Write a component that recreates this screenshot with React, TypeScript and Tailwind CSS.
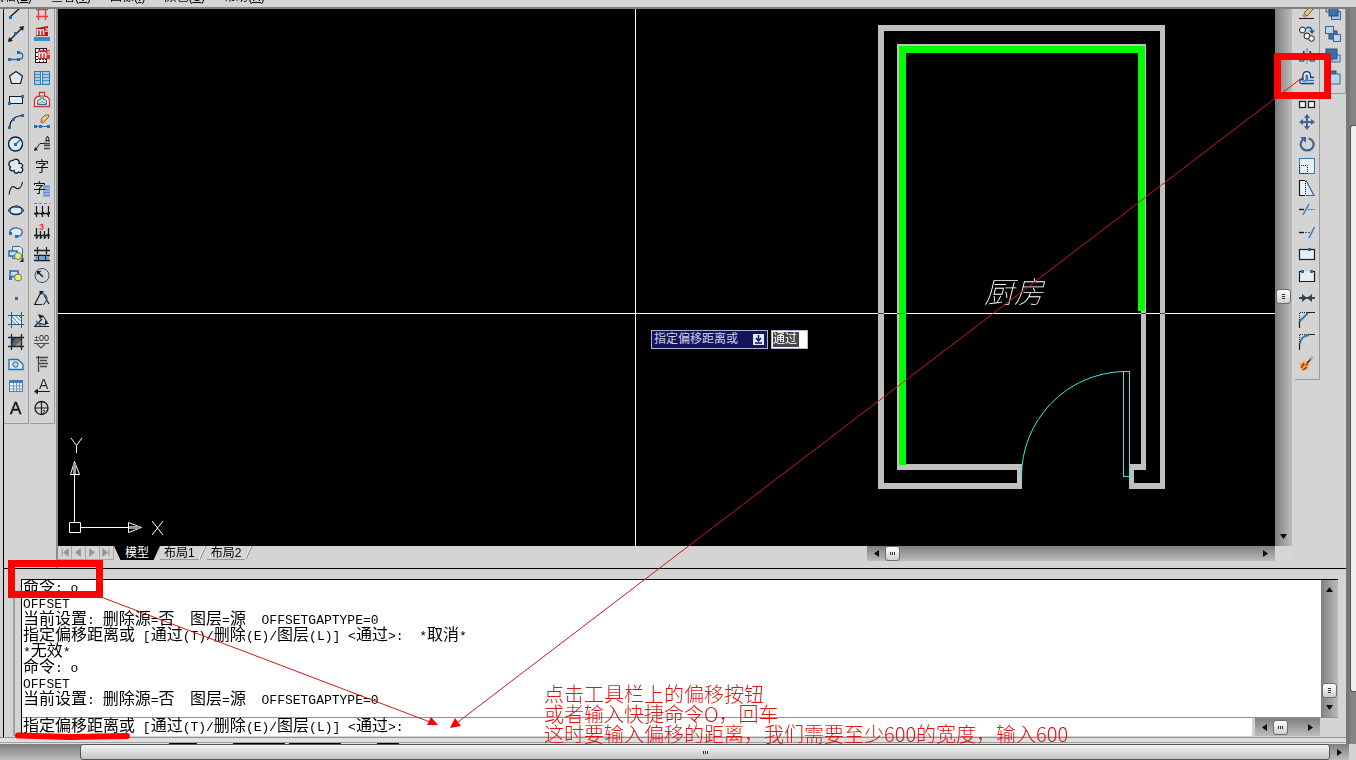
import React from 'react';

interface Tool {
    label: string;
    icon: React.ReactNode;
}

const BLUE = '#1f6fb5';
const INK = '#1c1c1c';
const STEEL = '#3f648f';

// small square grip used by most of the drawing icons
const Grip = ({ x, y }: { x: number; y: number }) => (
    <rect x={x} y={y} width="3" height="3" fill={BLUE} stroke="none" />
);

const drawTools: Tool[] = [
    {
        label: '直线',
        icon: <><path d="M2 13L12 4" stroke={INK} strokeWidth="1.4" /><Grip x={1} y={12} /></>,
    },
    {
        label: '构造线',
        icon: <><path d="M2 14L14 2" stroke={INK} strokeWidth="1.4" /><path d="M0 16l1-5 4 4zM16 0l-5 1 4 4z" fill={INK} /><Grip x={6} y={6} /></>,
    },
    {
        label: '多段线',
        icon: <><path d="M1 11.500H11C16 11 16 5 11 4.500" stroke={STEEL} strokeWidth="1.300" /><Grip x={0} y={10} /><Grip x={9} y={10} /><Grip x={9} y={3} /></>,
    },
    {
        label: '正多边形',
        icon: <path d="M8 1.500L14.500 6L12.500 13.500H3.500L1.500 6Z" fill="#dcebf8" stroke={INK} strokeWidth="1.200" />,
    },
    {
        label: '矩形',
        icon: <><rect x="1.500" y="4.500" width="13" height="7" fill="#dcebf8" stroke={INK} /><Grip x={0} y={10} /><Grip x={13} y={3} /></>,
    },
    {
        label: '圆弧',
        icon: <><path d="M1.500 14C2 6 7 2 14 1.500" stroke={INK} strokeWidth="1.200" /><Grip x={0} y={12} /><Grip x={4} y={4} /><Grip x={13} y={0} /></>,
    },
    {
        label: '圆',
        icon: <><circle cx="7.500" cy="8" r="7" fill="#dcebf8" stroke={INK} strokeWidth="1.400" /><path d="M8 8L12 4" stroke={BLUE} strokeWidth="1.300" /><Grip x={6} y={7} /></>,
    },
    {
        label: '修订云线',
        icon: <path d="M5 2.500C8 -.5 12 2 11 5.500C15 5 15.500 9 13.500 9.500C16.500 12 13.500 16 10.500 14C9 16 6 15.500 6 12.500C3 14 .5 11 2.500 9C-.5 7 1 2 5 2.500Z" fill="#dcebf8" stroke={INK} strokeWidth="1.300" />,
    },
    {
        label: '样条曲线',
        icon: <path d="M1 14.500C2 8 4 5 7 7.500S13 9 14.500 2" stroke={INK} strokeWidth="1.100" />,
    },
    {
        label: '椭圆',
        icon: <><ellipse cx="8" cy="8.500" rx="6.500" ry="4" fill="#dcebf8" stroke={INK} strokeWidth="1.300" /><Grip x={0} y={7} /><Grip x={13} y={7} /><Grip x={7} y={3} /></>,
    },
    {
        label: '椭圆弧',
        icon: <><path d="M2 9C1 4 8 3 11 4.500C16 6 15 12 9 12.500" fill="#dcebf8" stroke={STEEL} strokeWidth="1.300" /><Grip x={1} y={8} /><Grip x={7} y={11} /></>,
    },
    {
        label: '插入块',
        icon: <><path d="M4.500 .5H12L14.500 3V12.500H4.500Z" fill="#dcebf8" stroke={STEEL} /><rect x="1" y="5" width="8" height="5" fill="#c6dcf0" stroke={BLUE} strokeWidth="1.500" /><circle cx="10" cy="10" r="3.500" fill="#e4eb92" stroke="#6b7d2a" /><path d="M15.500 12v4h-4z" fill={INK} /></>,
    },
    {
        label: '创建块',
        icon: <><rect x="2" y="3" width="8" height="5.500" fill="#c6dcf0" stroke={BLUE} strokeWidth="1.500" /><circle cx="10" cy="9.500" r="3.500" fill="#e4eb92" stroke="#6b7d2a" /><Grip x={1} y={9} /></>,
    },
    { label: '点', icon: <Grip x={7} y={7} /> },
    {
        label: '图案填充',
        icon: <><rect x="3" y="3" width="10" height="10" fill="#eff7ff" /><path d="M3.500 4L12 13M7 3.500L12.500 9M3.500 8L8 12.500M10 3l3 3" stroke={BLUE} /><path d="M3.500 0V16M13.500 0V16M0 3.500H16M0 12.500H16" stroke="#245c8c" /></>,
    },
    {
        label: '渐变色',
        icon: <><rect x="3" y="3" width="10" height="10" fill="#5d6558" /><path d="M3 3h5l-5 9z" fill="#263b68" /><path d="M13 6v7H6z" fill="#95947a" /><path d="M3.500 0V16M13.500 0V16M0 3.500H16M0 12.500H16" stroke="#202a3a" strokeWidth="1.400" /></>,
    },
    {
        label: '面域',
        icon: <><path d="M1 3.500H10L15 8.500V13.500H1Z" fill="#dcebf8" stroke={BLUE} strokeWidth="1.300" /><circle cx="7.500" cy="8.500" r="2.700" fill="#d4d0d0" stroke="#345a80" /></>,
    },
    {
        label: '表格',
        icon: <><rect x="1.500" y="2.500" width="13" height="11" fill="#f6faff" stroke="#4a76bd" /><rect x="1" y="2" width="14" height="3" fill="#4a76bd" /><path d="M2 8H14M2 11H14M5.500 5V13M8.500 5V13M11.500 5V13" stroke="#6d96d2" /></>,
    },
    {
        label: '多行文字',
        icon: <text x="2" y="14" fontSize="17" fill="#111" stroke="#111" strokeWidth=".4" className="font-['Liberation_Sans']">A</text>,
    },
];

const houseTools: Tool[] = [
    {
        label: '轴网',
        icon: <path d="M4.500 0V16M11.500 0V16M2 5.500H14M2 12.500H14" stroke="#ee3434" strokeWidth="1.300" />,
    },
    {
        label: '面积',
        icon: <><path d="M2 2L14 0V10H2Z" fill="#c4181c" /><text x="2" y="9" fontSize="10" fontWeight="bold" fill="#fff" className="font-['Liberation_Sans']">m²</text><rect x="0" y="11" width="16" height="4" fill="#4189c2" /></>,
    },
    {
        label: '面积表',
        icon: <><rect x="1.500" y=".5" width="11" height="14" fill="#fff" stroke={INK} /><path d="M2 4.500H12M2 8.500H12M2 11.500H12M5.500 1V14M9.500 1V14" stroke={INK} strokeDasharray="2 1" /><rect x="4" y="2" width="12" height="9" fill="#cb3538" /><text x="4" y="10" fontSize="10" fontWeight="bold" fill="#fff" className="font-['Liberation_Sans']">m²</text></>,
    },
    {
        label: '门窗',
        icon: <><rect x=".5" y="1.500" width="15" height="13" fill="#a7cce0" stroke="#2f7da1" /><path d="M1 4.500H15M1 7.500H15M1 10.500H15" stroke="#4f8bc0" /><rect x="6.500" y="1.500" width="2" height="13" fill="#e3f2f8" stroke="#2f7da1" /></>,
    },
    {
        label: '房间',
        icon: <><path d="M5.500 .5H10.500V4.500H13L15.500 7.500V14.500H.5V7.500L3 4.500H5.500Z" fill="#eee" stroke="#cf3535" strokeWidth="1.300" /><path d="M7 3V7L3.500 8.500V12.500H12.500V8.500L9 7V3" fill="#e2e9a4" stroke="#1f6fb5" /><path d="M4 12L8 9.500 12 12" stroke="#49a0cc" /></>,
    },
    {
        label: '擦除线段',
        icon: <><path d="M0 12.500H16" stroke={BLUE} /><Grip x={0} y={11} /><Grip x={5} y={11} /><Grip x={13} y={11} /><path d="M7 5l4-4 4 0-1 3-5 5z" fill="#e7c46d" stroke="#555" strokeWidth=".8" /><path d="M7 5l3 3-2 2-2-2z" fill="#d97b6c" /></>,
    },
    {
        label: '引出标注',
        icon: <><path d="M1 14L6 7.500H11" stroke={INK} /><path d="M0 15l1-4 3 3z" fill={INK} /><path d="M10 9.500H16M10 12.500H16M10 7.500H16" stroke="#444" strokeWidth="1.400" /><path d="M12 6V3L13.500 0L15 3V6M12 4.500H15" stroke={INK} /></>,
    },
    { label: '单行文字', icon: <text x="1" y="13" fontSize="14" fill="#111" className="font-['Noto_Sans_CJK_SC']">字</text> },
    {
        label: '文字段落',
        icon: <><path d="M9 6.500H16M9 9.500H16M9 12.500H16M9 15.500H16" stroke="#5b8fd0" strokeWidth="2" /><text x="-1" y="12" fontSize="13" fill="#111" className="font-['Noto_Sans_CJK_SC']">字</text></>,
    },
    {
        label: '逐点标注',
        icon: <><path d="M0 1.500H16" stroke="#ee5050" strokeDasharray="3 2" /><path d="M2.500 4V15M8.500 4V15M14.500 4V15M0 11.500H16" stroke={INK} strokeWidth="1.300" /><path d="M1 13l3-3M7 13l3-3M13 13l3-3" stroke={INK} /></>,
    },
    {
        label: '尺寸标注',
        icon: <><text x="5" y="6" fontSize="9" fontWeight="bold" fill="#e33" className="font-['Liberation_Sans']">3</text><path d="M2.500 4V15M6.500 7V15M10.500 7V15M14.500 4V15M0 11.500H16" stroke={INK} strokeWidth="1.300" /><path d="M2 10l2 4M6 10l2 4M10 10l2 4M13 10l2 4" stroke={INK} /></>,
    },
    {
        label: '门窗标注',
        icon: <><path d="M0 4.500H16M3.500 1V8M12.500 1V8" stroke={INK} strokeWidth="1.300" /><path d="M0 9.500H16M0 14.500H16" stroke={INK} strokeWidth="1.300" /><rect x="1" y="10" width="14" height="4" fill="#6fa3d2" /><path d="M4.500 9V15M11.500 9V15" stroke={INK} /></>,
    },
    {
        label: '半径标注',
        icon: <><circle cx="8" cy="7.500" r="7" stroke="#31506f" /><path d="M9 9L5 5" stroke={INK} strokeWidth="1.500" /><path d="M2.500 3h5l-4 4z" fill={INK} /></>,
    },
    {
        label: '角度标注',
        icon: <><path d="M0 14.500H8M1 14L7 2M10 5l5 9" stroke={INK} strokeWidth="1.200" /><path d="M5 4C9 2 12 5 13 8C13 10 11 13 9 15" stroke={STEEL} strokeWidth="1.400" /><path d="M5 1l5 0-3 4z" fill={INK} /></>,
    },
    {
        label: '弧长标注',
        icon: <><path d="M0 14.500H15M1 14L8 7M4 11l8 2" stroke={INK} strokeWidth="1.200" /><path d="M4 2l6 2-4 3zM11 8l4 4-4 0z" fill={INK} /><path d="M9 4L13 10" stroke={INK} /><path d="M2 9l5 5" stroke={BLUE} strokeWidth="1.500" /></>,
    },
    {
        label: '标高标注',
        icon: <><text x="0" y="7" fontSize="9" fill="#222" className="font-['Liberation_Sans']">±00</text><path d="M0 9.500H15M3 10l4 4 4-4" stroke="#5b4b41" strokeWidth="1.200" /></>,
    },
    {
        label: '做法标注',
        icon: <path d="M4.500 0V16M2 1.500H14M6 4.500H13M4 7.500H14M6 10.500H13" stroke="#454545" strokeWidth="1.300" />,
    },
    {
        label: '箭头引注',
        icon: <><text x="5" y="11" fontSize="14" fill="#333" className="font-['Liberation_Sans']">A</text><path d="M1 13.500H16" stroke={INK} /><path d="M0 13.500l4-3v6z" fill={INK} /></>,
    },
    {
        label: '索引符号',
        icon: <><circle cx="7.500" cy="8" r="6.500" stroke={INK} strokeWidth="1.300" /><path d="M1 8H14M7.500 1V15" stroke={INK} strokeWidth="1.200" /><path d="M9 10.500h2l-2 3h2" stroke={INK} strokeWidth=".8" /></>,
    },
];

const modifyTools: Tool[] = [
    {
        label: '删除',
        icon: <><path d="M0 14.500H15" stroke={INK} /><path d="M5 9l6-6 4 1-7 8z" fill="#eccb76" stroke="#444" strokeWidth=".9" /><path d="M5 9l3 3-2 2-3-2z" fill="#e08370" /></>,
    },
    {
        label: '复制',
        icon: <><circle cx="3.500" cy="4" r="3" fill="#e8f1f8" stroke={INK} /><circle cx="8" cy="10" r="3" fill="#e8f1f8" stroke={INK} /><circle cx="12.500" cy="12.500" r="2.800" fill="#e8f1f8" stroke={INK} /><path d="M7 2.500C10 0 13 2 13 5" stroke="#275a8f" strokeWidth="1.600" /><path d="M10 4.500h6l-3 3.500z" fill="#275a8f" /></>,
    },
    {
        label: '镜像',
        icon: <><path d="M8 0V16" stroke="#2f75b5" strokeDasharray="4 1" /><path d="M5 3V13H0.500ZM11 3V13H15.500Z" fill="#e8f1f8" stroke={INK} /></>,
    },
    {
        label: '偏移',
        icon: <><path d="M15 13.500H2.500C.5 13.500 0 10 2.500 9.500H4V5C4.500 .5 11 .5 11.500 5V7.500H15" fill="#e0edf8" stroke="#173a60" strokeWidth="1.300" /><path d="M15 10.500H8.500V5.500H7V11H3.500" stroke="#2f75b5" strokeWidth="1.300" /></>,
    },
    {
        label: '阵列',
        icon: <><rect x=".5" y="9.500" width="6" height="6" fill="#eef4fa" stroke={INK} strokeWidth="1.200" /><rect x="9.500" y="9.500" width="6" height="6" fill="#eef4fa" stroke={INK} strokeWidth="1.200" /></>,
    },
    {
        label: '移动',
        icon: <><path d="M8 2V14M2 8H14" stroke={STEEL} strokeWidth="2" /><path d="M8 0l3 4H5zM8 16l3-4H5zM0 8l4-3v6zM16 8l-4-3v6z" fill={STEEL} /></>,
    },
    {
        label: '旋转',
        icon: <><path d="M4 3.500C1 6 1 10 3 12C6 16 13 15 14.500 9.500C15 6 13 3 9.500 2.500" stroke={STEEL} strokeWidth="2.200" /><path d="M1 1h6v6z" fill={STEEL} /></>,
    },
    {
        label: '缩放',
        icon: <><rect x=".5" y=".5" width="15" height="15" fill="#e4eff8" stroke="#4379a8" /><path d="M0 7.500H8.500V16" stroke={INK} strokeDasharray="1 1" /><path d="M.5 7V16M0 15.500H9" stroke={INK} strokeDasharray="1 1" /></>,
    },
    {
        label: '拉伸',
        icon: <><path d="M7 .5L15 15.500H7" fill="#dfecf6" stroke={STEEL} strokeWidth="1.200" /><path d="M6 .5H.5V15.500H6" fill="#eef4f8" stroke={INK} strokeWidth="1.200" /><path d="M6.500 1V15" stroke={INK} strokeDasharray="1 1" /></>,
    },
    {
        label: '修剪',
        icon: <><path d="M0 7.500H5" stroke={INK} strokeWidth="1.400" /><path d="M9 7.500H16" stroke={BLUE} strokeDasharray="2 1" /><path d="M4 13L10 2" stroke="#2f75b5" strokeWidth="1.400" /></>,
    },
    {
        label: '延伸',
        icon: <><path d="M0 8.500H5" stroke={INK} strokeWidth="1.400" /><path d="M6 8.500H11" stroke={BLUE} strokeDasharray="2 1" /><path d="M10 14L15.500 3" stroke="#2f75b5" strokeWidth="1.400" /></>,
    },
    {
        label: '打断于点',
        icon: <><rect x=".5" y="3.500" width="15" height="10" fill="#e4eff8" stroke={INK} strokeWidth="1.200" /><rect x="9" y="2" width="3" height="3" fill={STEEL} /></>,
    },
    {
        label: '打断',
        icon: <><path d="M3 3.500H.5V13.500H15.500V3.500H13" fill="#e4eff8" stroke={INK} strokeWidth="1.200" /><rect x="2" y="2" width="3" height="3" fill={STEEL} /><rect x="11" y="2" width="3" height="3" fill={STEEL} /></>,
    },
    {
        label: '合并',
        icon: <><path d="M0 8H16" stroke={INK} strokeWidth="1.600" /><path d="M3 4l5 4-5 4zM13 4L8 8l5 4z" fill="#2b4257" /></>,
    },
    {
        label: '倒角',
        icon: <><path d="M.5 8V.5H8" stroke={INK} strokeDasharray="1 1" /><path d="M.5 16V8.500M8 .5H16" stroke={INK} strokeWidth="1.200" /><path d="M1 9L9 1" stroke="#2f75b5" strokeWidth="1.800" /></>,
    },
    {
        label: '圆角',
        icon: <><path d="M.5 8V.5H8" stroke={INK} strokeDasharray="1 1" /><path d="M.5 16V9M9 .5H16" stroke={INK} strokeWidth="1.200" /><path d="M1 9.500C1.500 5 5 1.500 10 1" stroke="#2f75b5" strokeWidth="2" /></>,
    },
    {
        label: '分解',
        icon: <><path d="M0 6l3 1 2-4 2 3 4 0-1 4-2 4-3-1-3 2 0-4z" fill="#f0b95a" /><path d="M2 12l3-5M6 9l3-1M4 14l4-3M3 8l2 2" stroke="#c8351c" strokeWidth="1.700" /><path d="M8 7l4-4" stroke={INK} strokeWidth="1.400" /><path d="M12 0v5M10 2.500h5M14 0l-3 5" stroke="#8aa4bd" strokeWidth=".8" /></>,
    },
];

const orderTools: Tool[] = [
    { label: '前置', icon: <><rect x="1" y="0" width="9" height="8" fill="#a9c8e4" stroke={STEEL} /><rect x="6.500" y="7.500" width="9" height="8" fill="#a9c8e4" stroke={STEEL} /><rect x="4" y="4" width="9" height="8" fill="#3d6fae" stroke="#27507f" /></> },
    { label: '后置', icon: <><rect x="4" y="5" width="8" height="8" fill="#3d6fae" stroke="#27507f" /><rect x=".5" y=".5" width="8" height="7" fill="#b9d5ec" stroke={STEEL} /><rect x="8.500" y="8.500" width="7" height="7" fill="#b9d5ec" stroke={STEEL} /></> },
    { label: '置于对象之上', icon: <><rect x="7" y="7" width="8" height="7" fill="#b9d5ec" stroke={STEEL} /><rect x="1" y="1" width="11" height="10" fill="#3d6fae" stroke="#27507f" /></> },
    { label: '置于对象之下', icon: <><rect x="1" y="1" width="10" height="9" fill="#3d6fae" stroke="#27507f" /><rect x="5" y="4" width="10" height="10" fill="#b9d5ec" stroke={STEEL} /></> },
];

const Toolbar = ({ name, tools }: { name: string; tools: Tool[] }) => (
    <div role="toolbar" aria-label={name} className="-mt-2 flex w-[25px] shrink-0 flex-col self-start border-r border-b border-[#9a9a9a] pb-1">
        {tools.map((tool) => (
            <button key={tool.label} type="button" aria-label={tool.label} className="flex h-[22px] items-center justify-center">
                <svg width="16" height="16" viewBox="0 0 16 16" fill="none" className="overflow-visible">
                    {tool.icon}
                </svg>
            </button>
        ))}
    </div>
);

const Arrow = ({ dir }: { dir: 'left' | 'right' | 'up' | 'down' }) => {
    const shapes = {
        left: 'M6 0v7L1 3.500z',
        right: 'M1 0v7l5-3.500z',
        up: 'M0 6h7L3.500 1z',
        down: 'M0 1h7L3.500 6z',
    };
    return (
        <svg width="7" height="7" viewBox="0 0 7 7" className="shrink-0">
            <path d={shapes[dir]} fill="#0c0c0c" />
        </svg>
    );
};

// scrollbar handle with the three little ridges
const Thumb = ({ vertical = false }: { vertical?: boolean }) => (
    <div className="flex size-[15px] shrink-0 items-center justify-center rounded-[3px] border border-[#6e6e6e] bg-linear-to-b from-white to-[#cfcfcf]">
        <svg width="5" height="5" viewBox="0 0 5 5" stroke="#333" shapeRendering="crispEdges">
            <path d={vertical ? 'M1 .5H4M1 2.500H4M1 4.500H4' : 'M.5 1V4M2.500 1V4M4.500 1V4'} />
        </svg>
    </div>
);

const menus = [
    ['编辑', 'E'],
    ['查看', 'V'],
    ['图像', 'I'],
    ['颜色', 'C'],
    ['帮助', 'H'],
];

const MenuBar = () => (
    <nav className="flex h-[9px] shrink-0 items-end gap-[19px] overflow-hidden border-b-2 border-[#808080] bg-[#d4d4d4] text-[12px] leading-[14px]">
        {menus.map(([name, key], i) => (
            <button key={key} type="button" className={i === 0 ? '-ml-2 mb-[3px] shrink-0' : 'mb-[3px] shrink-0'}>
                {name}(<u>{key}</u>)
            </button>
        ))}
    </nav>
);

const Drawing = () => (
    <svg className="block h-full w-full" fill="none">
        <g transform="translate(-58 -9)">
            {/* walls */}
            <g fill="#c0c0c0" shapeRendering="crispEdges">
                <path d="M878 25H1165V31H884V483H1017V470H897V44H1146V470H1134V483H1160V31H1165V489H1129V464H1141V50H903V464H1022V489H878Z" />
            </g>
            <path d="M899 46H1145V311H1138V53H906V465H899Z" fill="#00ff00" shapeRendering="crispEdges" />
            {/* door */}
            <path d="M1021.500 477A105 105 0 0 1 1123 371.500" stroke="#40e6e6" />
            <path d="M1123.500 371.500H1129.500V476.500H1123.500Z" stroke="#40e6e6" shapeRendering="crispEdges" />
            <text x="984" y="303" fontSize="30" fill="#fff" fontStyle="italic" className="font-['Noto_Sans_CJK_SC',sans-serif] font-thin">厨房</text>
            {/* coordinate axes */}
            <g stroke="#fff">
                <path d="M69.500 522.500H80.500V532.500H69.500ZM74.500 522V474M70.500 474.500H79.500L74.500 461.500ZM81 527.500H128M128.500 522.500V532.500L141.500 527.500Z" />
                <path d="M74.500 464V474M129 527.500H140" stroke="#999" strokeWidth="3" />
                <path d="M71 438L76.500 445.500V453M82 438L76.500 445.500M152 521L163 535M163 521L152 535" />
            </g>
        </g>
    </svg>
);

const Canvas = () => (
    <div className="relative min-w-0 flex-1 overflow-hidden bg-black">
        <Drawing />
        {/* crosshair */}
        <div className="absolute inset-x-0 top-[304px] h-px bg-white mix-blend-difference" />
        <div className="absolute inset-y-0 left-[577px] w-px bg-white" />
        <label className="absolute top-[321px] left-[593px] flex items-center gap-[3px] text-[12px] leading-[17px]">
            <span className="flex w-[117px] items-center justify-between border border-[#b4b4d8] bg-[#14145c] px-[2px] text-[#d0d0ea]">
                指定偏移距离或
                <svg width="11" height="11" viewBox="0 0 11 11" className="mr-px">
                    <rect width="11" height="11" fill="#dcecff" />
                    <path d="M5.500 1V6M3 4l2.500 3L8 4M2 9H9" stroke="#10106a" fill="none" strokeWidth="1.400" />
                </svg>
            </span>
            <span className="flex w-[37px] border border-[#b4b4d8] bg-white px-px py-px">
                <input defaultValue="通过" aria-label="偏移距离" className="h-[15px] w-[26px] bg-[#484848] text-[12px] text-white outline-none" />
            </span>
        </label>
    </div>
);

const TabSlash = () => (
    <svg width="8" height="14" viewBox="0 0 8 14" className="shrink-0" fill="none">
        <path d="M1 13L7 0" stroke="#777" />
        <path d="M0 13L6 0" stroke="#f4f4f4" />
    </svg>
);

const navShapes = ['M4.500 3V11M11 3V11L6 7Z', 'M9 3V11L4 7Z', 'M4 3V11L9 7Z', 'M9.500 3V11M3 3V11L8 7Z'];
const navLabels = ['第一个', '上一个', '下一个', '最后一个'];

const LayoutTabs = () => (
    <div className="flex h-[15px] items-stretch text-[12px] leading-[14px]">
        <div className="flex w-[804px] shrink-0">
            {navShapes.map((d, i) => (
                <button key={d} type="button" aria-label={navLabels[i]} className="h-[14px] w-[14px] border-r border-b border-[#a8a8a8]">
                    <svg width="13" height="13" viewBox="0 0 14 14" fill="#959595" stroke="#959595">
                        <path d={d} />
                    </svg>
                </button>
            ))}
            <button type="button" className="h-[14px] w-[46px] bg-black text-white [clip-path:polygon(0_0,100%_0,86%_100%,14%_100%)]">模型</button>
            <button type="button" className="h-[14px] border-b border-[#999] pr-1 pl-1">布局1</button>
            <TabSlash />
            <button type="button" className="h-[14px] border-b border-[#999] px-1">布局2</button>
            <TabSlash />
        </div>
        <div className="ml-[5px] flex flex-1 items-center bg-linear-to-b from-[#808080] to-[#bcbcbc] px-[6px]">
            <Arrow dir="left" />
            <div className="ml-[5px] flex flex-1">
                <Thumb />
            </div>
            <Arrow dir="right" />
        </div>
        <div className="w-[17px] shrink-0 bg-[#d6d6d6]" />
    </div>
);

// CJK glyphs are two columns wide, Latin ones a single column
const Mono = ({ children }: { children: string }) => (
    <>
        {children.split(/([\u4e00-\u9fff]+)/).map((part, i) => (
            <span key={i} className={i % 2 === 1 ? 'text-[16px]' : 'text-[13px]'}>{part}</span>
        ))}
    </>
);

const history = [
    '命令: o',
    'OFFSET',
    '当前设置: 删除源=否  图层=源  OFFSETGAPTYPE=0',
    '指定偏移距离或 [通过(T)/删除(E)/图层(L)] <通过>:  *取消*',
    '*无效*',
    '命令: o',
    'OFFSET',
    '当前设置: 删除源=否  图层=源  OFFSETGAPTYPE=0',
];

const CommandPanel = () => (
    <section aria-label="命令行" className="ml-[3px] flex shrink-0 flex-col border-t border-l border-black bg-[#d4d4d4] pt-[10px] pr-2 pb-px pl-[9px] font-['Liberation_Mono','Noto_Sans_CJK_SC',monospace] text-black">
        <div className="flex border-l-2 border-[#a0a0a0] pl-[6px]">
            <div className="flex min-w-0 flex-1 flex-col border-t border-l border-black">
                <div className="flex h-[138px] border-b border-[#909090]">
                    <div className="flex-1 overflow-hidden bg-white pl-px">
                        {history.map((line, i) => (
                            <p key={i} className="h-4 leading-4 whitespace-pre">
                                <Mono>{line}</Mono>
                            </p>
                        ))}
                    </div>
                    <div className="flex w-[17px] flex-col items-center bg-linear-to-r from-[#808080] to-[#bcbcbc] pt-[6px] pb-[6px]">
                        <Arrow dir="up" />
                        <div className="flex-1" />
                        <Thumb vertical />
                        <div className="h-[6px]" />
                        <Arrow dir="down" />
                    </div>
                </div>
                <div className="flex h-[18px]">
                    <label className="flex-1 bg-white pl-px leading-[18px] whitespace-pre">
                        <Mono>{'指定偏移距离或 [通过(T)/删除(E)/图层(L)] <通过>:'}</Mono>
                        <input aria-label="命令输入" className="ml-2 w-20 bg-transparent text-[13px] outline-none" />
                    </label>
                    <div className="ml-[3px] flex w-[65px] items-center bg-linear-to-b from-[#808080] to-[#bcbcbc] px-[6px]">
                        <Arrow dir="left" />
                        <div className="ml-[5px] flex flex-1">
                            <Thumb />
                        </div>
                        <Arrow dir="right" />
                    </div>
                    <div className="w-[18px]" />
                </div>
            </div>
        </div>
    </section>
);

const Annotations = () => (
    <>
        <svg className="pointer-events-none absolute inset-0 h-full w-full" fill="none" stroke="#ff0000">
            <path d="M11.500 563.500H99.500V594.500H11.500Z" strokeWidth="7" />
            <path d="M1277.500 56.500H1327.500V95.500H1277.500Z" strokeWidth="7" />
            <path d="M101 597L430 722M1303 77L458 722" stroke="#d01818" />
            <path d="M438 725l-11 0 4-8zM450 728l5-10 6 8z" fill="#ff0000" stroke="none" />
            <path d="M18 735.500L70 737L127 736" strokeWidth="6" strokeLinecap="round" strokeLinejoin="round" />
        </svg>
        <p className="pointer-events-none absolute top-[684px] left-[544px] font-['Noto_Sans_CJK_SC',sans-serif] text-[20px] leading-[20px] font-light whitespace-pre text-[#e01414]">
            点击工具栏上的偏移按钮<br />
            或者输入快捷命令O，回车<br />
            这时要输入偏移的距离，我们需要至少600的宽度，输入600
        </p>
    </>
);

export default function App() {
    return (
        <div className="relative flex h-screen flex-col overflow-hidden bg-[#d4d4d4] font-['Liberation_Sans','Noto_Sans_CJK_SC',sans-serif] text-black">
            <MenuBar />
            <div className="flex min-h-0 flex-1">
                <main className="flex min-w-0 flex-1 flex-col">
                    <div className="ml-[3px] flex min-h-0 flex-1 overflow-hidden border-l border-black">
                        <div className="flex gap-px pr-px">
                            <Toolbar name="绘图" tools={drawTools} />
                            <Toolbar name="标注" tools={houseTools} />
                        </div>
                        <div className="flex min-w-0 flex-1 flex-col border-l-2 border-[#8c8c8c] pb-[7px]">
                            <div className="flex min-h-0 flex-1">
                                <Canvas />
                                <div className="flex w-[17px] shrink-0 flex-col items-center bg-linear-to-r from-[#808080] to-[#bcbcbc] pb-[6px]">
                                    <div className="h-[280px]" />
                                    <Thumb vertical />
                                    <div className="flex-1" />
                                    <Arrow dir="down" />
                                </div>
                            </div>
                            <LayoutTabs />
                        </div>
                        <div className="flex gap-px pl-[3px]">
                            <Toolbar name="修改" tools={modifyTools} />
                            <Toolbar name="绘图次序" tools={orderTools} />
                        </div>
                    </div>
                    <CommandPanel />
                    <div className="flex h-[7px] shrink-0 items-end border-t border-[#909090] bg-[#e0e0e0]">
                        <div className="flex h-[2px] flex-1 gap-1 border-t border-[#a0a0a0] pl-[165px]">
                            <div className="ml-1 h-px w-7 bg-black" />
                            <div className="ml-8 h-px w-[52px] bg-black" />
                            <div className="h-px w-[52px] bg-black" />
                            <div className="ml-8 h-px w-[22px] bg-black" />
                        </div>
                    </div>
                </main>
                <div className="flex w-[10px] shrink-0 border-l-4 border-[#777]">
                    <div className="flex flex-1 flex-col bg-[#848484] pb-[52px]">
                        <div className="h-[116px]" />
                        <div className="flex-1 rounded-l-[3px] border-y border-l border-[#555] bg-[#f0f0f0]" />
                    </div>
                </div>
            </div>
            <div className="flex h-4 shrink-0 bg-linear-to-b from-[#808080] to-[#bcbcbc] pl-20">
                <div className="flex flex-1 items-center justify-center rounded-[3px] border border-[#555] bg-linear-to-b from-[#f4f4f4] to-[#c4c4c4]">
                    <svg width="5" height="5" viewBox="0 0 5 5" stroke="#333" shapeRendering="crispEdges">
                        <path d="M.5 1V4M2.500 1V4M4.500 1V4" />
                    </svg>
                </div>
                <div className="flex w-[19px] items-center justify-center">
                    <Arrow dir="right" />
                </div>
                <div className="w-[7px] bg-[#d4d4d4]" />
            </div>
            <Annotations />
        </div>
    );
}
